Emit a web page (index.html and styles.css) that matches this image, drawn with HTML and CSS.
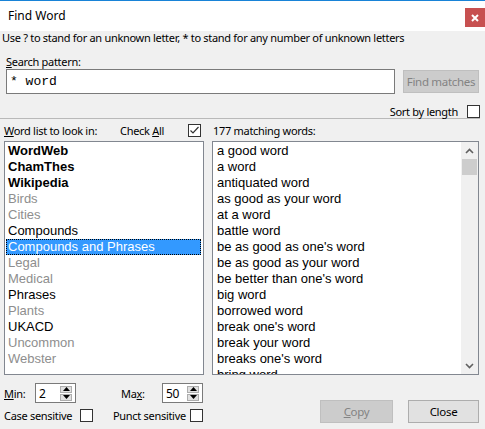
FILE: index.html
```html
<!DOCTYPE html>
<html>
<head>
<meta charset="utf-8">
<link rel="stylesheet" href="styles.css">
</head>
<body>
<div class="window">
  <div class="titlebar">
    <span class="title">Find Word</span>
    <div class="close"><svg width="8" height="8" viewBox="0 0 8 8"><path d="M1 1L7 7M7 1L1 7" stroke="#fff" stroke-width="2"/></svg></div>
  </div>
  <div class="body">
    <div class="hint">Use ? to stand for an unknown letter, * to stand for any number of unknown letters</div>
    <div class="label-search"><u>S</u>earch pattern:</div>
    <div class="search-row">
      <div class="input">* word</div>
      <div class="btn disabled find">Find matches</div>
    </div>
    <div class="sort-row">
      <span>Sort by length</span>
      <span class="check"></span>
    </div>
    <div class="separator"></div>
    <div class="header-row">
      <span class="h-left"><u>W</u>ord list to look in:</span>
      <span class="h-check">Check <u>A</u>ll</span>
      <span class="check checked"><svg width="11" height="11" viewBox="0 0 11 11"><path d="M1.5 5.5L4 8L9.5 2" fill="none" stroke="#333" stroke-width="1.2"/></svg></span>
      <span class="h-right">177 matching words:</span>
    </div>
    <div class="lists">
      <div class="list left-list">
        <div class="item bold">WordWeb</div>
        <div class="item bold">ChamThes</div>
        <div class="item bold">Wikipedia</div>
        <div class="item dim">Birds</div>
        <div class="item dim">Cities</div>
        <div class="item">Compounds</div>
        <div class="item selected">Compounds and Phrases</div>
        <div class="item dim">Legal</div>
        <div class="item dim">Medical</div>
        <div class="item">Phrases</div>
        <div class="item dim">Plants</div>
        <div class="item">UKACD</div>
        <div class="item dim">Uncommon</div>
        <div class="item dim">Webster</div>
      </div>
      <div class="list right-list">
        <div class="words">
          <div class="item">a good word</div>
          <div class="item">a word</div>
          <div class="item">antiquated word</div>
          <div class="item">as good as your word</div>
          <div class="item">at a word</div>
          <div class="item">battle word</div>
          <div class="item">be as good as one's word</div>
          <div class="item">be as good as your word</div>
          <div class="item">be better than one's word</div>
          <div class="item">big word</div>
          <div class="item">borrowed word</div>
          <div class="item">break one's word</div>
          <div class="item">break your word</div>
          <div class="item">breaks one's word</div>
          <div class="item">bring word</div>
        </div>
        <div class="scrollbar">
          <div class="arrow"><svg width="9" height="6" viewBox="0 0 9 6"><path d="M1 5L4.5 1.5L8 5" fill="none" stroke="#606060" stroke-width="1.6"/></svg></div>
          <div class="thumb"></div>
          <div class="track"></div>
          <div class="arrow"><svg width="9" height="6" viewBox="0 0 9 6"><path d="M1 1L4.5 4.5L8 1" fill="none" stroke="#606060" stroke-width="1.6"/></svg></div>
        </div>
      </div>
    </div>
    <div class="bottom">
      <div class="options">
        <div class="opt-row">
          <span class="lbl-min"><u>M</u>in:</span>
          <div class="spin"><span class="spin-val">2</span><div class="spin-btns"><span class="sb"><svg width="7" height="4" viewBox="0 0 7 4"><path d="M0 4L3.5 0L7 4Z" fill="#000"/></svg></span><span class="sb"><svg width="7" height="4" viewBox="0 0 7 4"><path d="M0 0L3.5 4L7 0Z" fill="#000"/></svg></span></div></div>
          <span class="lbl-max">Ma<u>x</u>:</span>
          <div class="spin"><span class="spin-val">50</span><div class="spin-btns"><span class="sb"><svg width="7" height="4" viewBox="0 0 7 4"><path d="M0 4L3.5 0L7 4Z" fill="#000"/></svg></span><span class="sb"><svg width="7" height="4" viewBox="0 0 7 4"><path d="M0 0L3.5 4L7 0Z" fill="#000"/></svg></span></div></div>
        </div>
        <div class="opt-row2">
          <span class="lbl-case">Case sensitive</span>
          <span class="check"></span>
          <span class="lbl-punct">Punct sensitive</span>
          <span class="check"></span>
        </div>
      </div>
      <div class="buttons">
        <div class="btn disabled copy"><u>C</u>opy</div>
        <div class="btn close-btn">Close</div>
      </div>
    </div>
  </div>
</div>
</body>
</html>
```
FILE: styles.css
```css
* { box-sizing: border-box; }
html, body { margin: 0; padding: 0; }
body { width: 485px; height: 429px; overflow: hidden; background: #f0f0f0; }
.window {
  width: 485px; height: 429px;
  font-family: "Noto Sans", sans-serif; font-size: 11px; letter-spacing: -0.3px; color: #000;
  background: #f0f0f0; white-space: nowrap;
}
u { text-decoration: underline; text-underline-offset: 1px; }
.titlebar {
  height: 31px; background: #fff; border-top: 1px solid #1883d7;
  display: flex; justify-content: space-between; align-items: flex-start;
}
.title { padding-left: 8px; font-size: 12px; line-height: 30px; letter-spacing: 0; }
.close {
  width: 20px; height: 19px; margin-top: 7px; background: #c75050;
  display: flex; align-items: center; justify-content: center;
}
.hint { height: 14px; line-height: 14px; padding-left: 2px; }
.label-search { margin-top: 10px; height: 14px; line-height: 14px; padding-left: 6px; }
.search-row { display: flex; align-items: flex-start; padding-left: 6px; height: 25px; }
.input {
  width: 389px; height: 25px; background: #fff; border: 1px solid #7a7a7a;
  font-family: "Liberation Mono", monospace; font-size: 13px; letter-spacing: 0; line-height: 23px; padding-left: 3px;
}
.btn {
  height: 23px; display: flex; align-items: center; justify-content: center;
  border: 1px solid #adadad; background: #e1e1e1; font-size: 11.5px;
}
.btn.disabled { background: #cccccc; border-color: #bfbfbf; color: #838383; }
.find { width: 76px; margin-left: 8px; margin-top: 1px; }
.sort-row {
  margin-top: 11px; height: 13px; display: flex; justify-content: flex-end; align-items: center;
  padding-right: 5px; gap: 9px;
}
.check { width: 13px; height: 13px; border: 1px solid #333; background: #fff; display: inline-flex; align-items: center; justify-content: center; flex: none; }
.separator { height: 1px; background: #b9b9b9; width: 480px; }
.header-row { margin-top: 4px; height: 14px; display: flex; align-items: center; }
.h-left { padding-left: 4px; width: 120px; }
.h-check { width: 68px; }
.h-right { margin-left: 12px; }
.lists { margin-top: 4px; height: 234px; display: flex; padding-left: 4px; gap: 8px; }
.list {
  background: #fff; border: 1px solid #828790; height: 234px; overflow: hidden;
  font-family: "Liberation Sans", Arial, sans-serif; font-size: 13px; letter-spacing: 0;
}
.left-list { width: 200px; padding: 1px 2px 0 1px; }
.left-list .item { height: 16px; line-height: 16px; padding-left: 2px; }
.item.bold { font-weight: bold; }
.item.dim { color: #8e8e8e; }
.item.selected { background: #3399ff; color: #fff; outline: 1px dotted #000; outline-offset: -1px; }
.right-list { width: 267px; display: flex; }
.words { flex: 1; padding: 1px 0 0 4px; overflow: hidden; }
.words .item { height: 16px; line-height: 16px; }
.scrollbar { width: 17px; background: #f0f0f0; display: flex; flex-direction: column; align-items: center; }
.arrow { height: 17px; width: 17px; display: flex; align-items: center; justify-content: center; }
.thumb { width: 15px; height: 16px; background: #cdcdcd; }
.track { flex: 1; }
.bottom { display: flex; justify-content: space-between; padding-right: 6px; }
.options { padding-left: 4px; }
.opt-row { margin-top: 8px; height: 20px; display: flex; align-items: center; }
.lbl-min { width: 31px; }
.lbl-max { width: 41px; margin-left: 45px; }
.spin { width: 41px; height: 20px; border: 1px solid #7a7a7a; background: #fff; display: flex; align-items: center; justify-content: space-between; padding: 0 3px 0 3px; }
.spin-val { font-size: 12px; }
.spin-btns { display: flex; flex-direction: column; gap: 1px; }
.sb { width: 12px; height: 7px; background: #e1e1e1; border: 1px solid #adadad; display: flex; align-items: center; justify-content: center; }
.opt-row2 { margin-top: 5px; height: 14px; display: flex; align-items: center; }
.lbl-case { width: 76px; }
.lbl-punct { margin-left: 20px; width: 77px; }
.buttons { display: flex; gap: 15px; margin-top: 25px; }
.copy { width: 73px; }
.close-btn { width: 71px; }
```
